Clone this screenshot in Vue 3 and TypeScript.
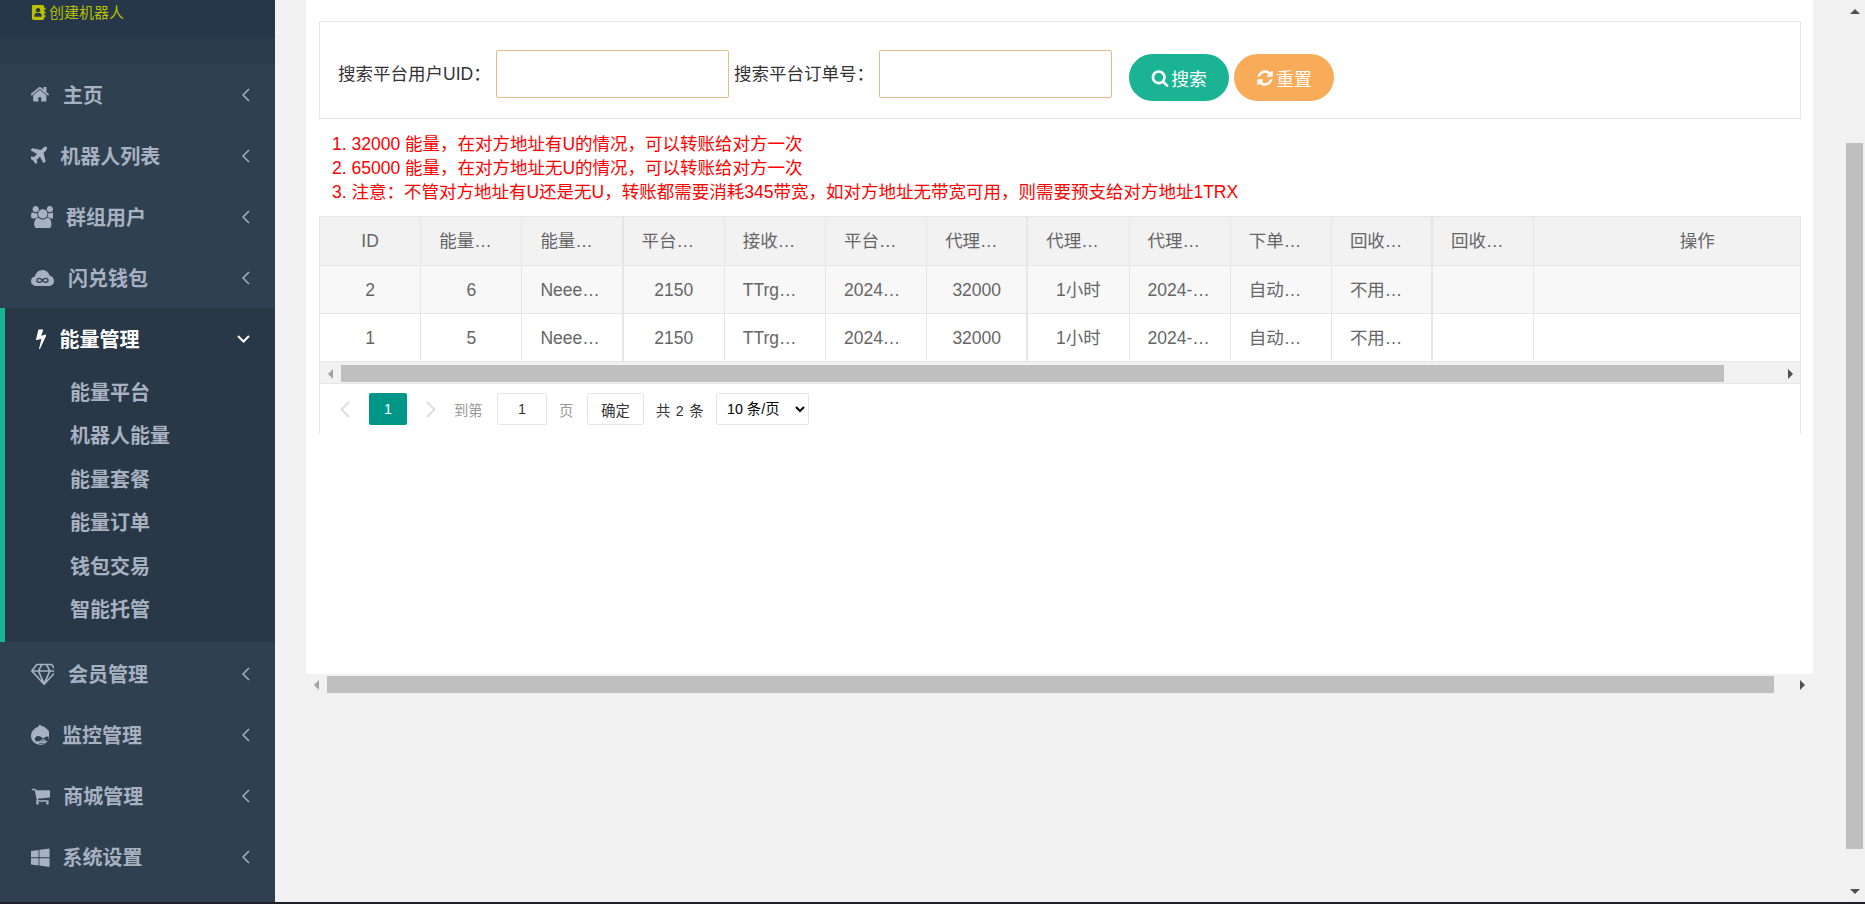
<script setup lang="ts">
interface Icon { d: string; x: number; w: number; size: number }
interface MenuItem { name: string; icon: Icon; gap: number; lead?: number }

const P = {
  home: 'M1408 992v480q0 26-19 45t-45 19h-384v-384h-256v384h-384q-26 0-45-19t-19-45v-480q0-1 .5-3t.5-3l575-474 575 474q1 2 1 6zm223-69l-62 74q-8 9-21 11h-3q-13 0-21-7l-692-577-692 577q-12 8-24 7-13-2-21-11l-62-74q-8-10-7-23.5t11-21.5l719-599q32-26 76-26t76 26l244 204v-195q0-14 9-23t23-9h192q14 0 23 9t9 23v408l219 182q10 8 11 21.5t-7 23.5z',
  plane: 'M1376 160q44 52 12 148t-108 172l-161 161 160 696q5 19-12 33l-128 96q-7 6-19 6-4 0-7-1-15-3-21-16l-279-508-259 259 53 194q5 17-8 31l-96 96q-9 9-23 9h-2q-15-2-24-13l-189-252-252-189q-11-7-13-23-1-13 9-25l96-97q9-9 23-9 6 0 8 1l194 53 259-259-508-279q-14-8-17-24-2-16 9-27l128-128q14-13 30-8l665 159 160-160q76-76 172-108t148 12z',
  users: 'M593 896q-162 5-265 128h-134q-82 0-138-40.5t-56-118.5q0-353 124-353 6 0 43.5 21t97.5 42.5 119 21.5q67 0 133-23-5 37-5 66 0 139 81 256zm1071 637q0 120-73 189.5t-194 69.5h-874q-121 0-194-69.5t-73-189.5q0-53 3.5-103.5t14-109 26.5-108.5 43-97.5 62-81 85.5-53.5 111.5-20q10 0 43 21.5t73 48 107 48 135 21.5 135-21.5 107-48 73-48 43-21.5q61 0 111.5 20t85.5 53.5 62 81 43 97.5 26.5 108.5 14 109 3.5 103.5zm-1024-1277q0 106-75 181t-181 75-181-75-75-181 75-181 181-75 181 75 75 181zm704 384q0 159-112.5 271.5t-271.5 112.5-271.5-112.5-112.5-271.5 112.5-271.5 271.5-112.5 271.5 112.5 112.5 271.5zm576 225q0 78-56 118.5t-138 40.5h-134q-103-123-265-128 81-117 81-256 0-29-5-66 66 23 133 23 59 0 119-21.5t97.5-42.5 43.5-21q124 0 124 353zm-128-609q0 106-75 181t-181 75-181-75-75-181 75-181 181-75 181 75 75 181z',
  bolt: 'M1333 566q18 20 7 44l-540 1157q-13 25-42 25-4 0-14-2-17-5-25.5-19t-4.5-30l197-808-406 101q-4 1-12 1-18 0-31-11-18-15-13-39l201-825q4-14 16-23t28-9h328q19 0 32 12.5t13 29.5q0 8-5 18l-171 463 396-98q8-2 12-2 19 0 34 15z',
  diamond: 'M212 768l623 665-300-665h-323zm812 772l349-772h-698zm-486-900l204-384h-262l-288 384h346zm675 793l623-665h-323zm-530-793h682l-204-384h-274zm827 0h346l-288-384h-262zm141-486l384 512q14 18 13 41.5t-17 40.5l-960 1024q-18 20-47 20t-47-20l-960-1024q-16-17-17-40.5t13-41.5l384-512q18-26 51-26h1152q33 0 51 26z',
  drupal: 'M1295 1586q-5-19-24-5-30 22-87 39t-131 17q-129 0-193-49-5-4-13-4-11 0-26 12-7 6-7.5 16t7.5 20q34 32 87.5 46t102.5 12.5 99-4.5q41-4 84.5-20.5t65-30 28.5-20.5q12-12 7-29zm-39-115q-19-47-39-61-23-15-76-15-47 0-71 10-29 12-78 56-26 24-12 44 9 8 17.5 4.5t31.5-23.5q3-2 10.5-8.5t10.5-8.5 10-7 11.5-7 12.5-5 15-4.5 16.5-2.5 20.5-1q27 0 44.5 7.5t23 14.5 13.5 22q10 17 12.5 20t12.5-1q23-12 14-34zm355-281q0-22-5-44.5t-16.5-45-34-36.5-52.5-14q-33 0-97 41.5t-129 83.5-101 42q-27 1-63.5-19t-76-49-83.5-58-100-49-111-19q-115 1-197 78.5t-84 178.5q-2 112 74 164 29 20 62.5 28.5t103.5 8.5q57 0 132-32.5t134-71 120-70.5 93-31q26 1 65 31.5t71.5 67 68 67.5 55.5 32q35 3 58.5-14t55.5-63q28-41 42.5-101t14.5-106zm53-160q0 164-62 304.5t-166 236-242.5 149.5-290.5 54-293-57.5-247.5-157-170.5-241.5-64-302q0-89 19.5-172.5t49-145.5 70.5-118.5 78.5-94 78.5-69.5 64.5-46.5 42.5-24.5q14-7 69-41.5t91-56 76.5-61 68-75 39-86.5q9 21 29 42t48.5 40 51.5 32 46 23.5 37.5 16.5 44.5 20q54 25 96 44.5t114 68 122.5 90.5 109.5 114.5 96 139 61.5 164 25 190.5z',
  cart: 'M704 1536q0 52-38 90t-90 38-90-38-38-90 38-90 90-38 90 38 38 90zm896 0q0 52-38 90t-90 38-90-38-38-90 38-90 90-38 90 38 38 90zm128-1088v512q0 24-16.5 42.5t-40.5 21.5l-1044 122q13 60 13 70 0 16-24 64h920q26 0 45 19t19 45-19 45-45 19h-1024q-26 0-45-19t-19-45q0-11 8-31.5t16-36 21.5-40 15.5-29.5l-177-823h-204q-26 0-45-19t-19-45 19-45 45-19h256q16 0 28.5 6.5t19.5 15.5 13 24.5 8 26 5.5 29.5 4.5 26h1201q26 0 45 19t19 45z',
  windows: 'M746 1006v651l-682-94v-557h682zm0-743v659h-682v-565zm982 743v786l-907-125v-661h907zm0-878v794h-907v-669z',
  search: 'M1216 832q0-185-131.5-316.5t-316.5-131.5-316.5 131.5-131.5 316.5 131.5 316.5 316.5 131.5 316.5-131.5 131.5-316.5zm512 832q0 52-38 90t-90 38q-54 0-90-38l-343-342q-179 124-399 124-143 0-273.5-55.5t-225-150-150-225-55.5-273.5 55.5-273.5 150-225 225-150 273.5-55.5 273.5 55.5 225 150 150 225 55.5 273.5q0 220-124 399l343 343q37 37 37 90z',
  refresh: 'M1639 1056q0 5-1 7-64 268-268 434.5t-478 166.5q-146 0-282.5-55t-243.5-157l-129 129q-19 19-45 19t-45-19-19-45v-448q0-26 19-45t45-19h448q26 0 45 19t19 45-19 45l-137 137q71 66 161 102t187 36q134 0 250-65t186-179q11-17 53-117 8-23 30-23h192q13 0 22.5 9.5t9.5 22.5zm25-800v448q0 26-19 45t-45 19h-448q-26 0-45-19t-19-45 19-45l138-138q-148-137-349-137-134 0-250 65t-186 179q-11 17-53 117-8 23-30 23h-199q-13 0-22.5-9.5t-9.5-22.5v-7q65-268 270-434.5t480-166.5q146 0 284 55.5t245 156.5l130-129q19-19 45-19t45 19 19 45z',
}

const CLOUD = 'M1 0'

const top: MenuItem[] = [
  { name: '主页', icon: { d: P.home, x: 64, w: 1664, size: 20.5 }, gap: 13 },
  { name: '机器人列表', icon: { d: P.plane, x: 90, w: 1320, size: 22 }, gap: 13 },
  { name: '群组用户', icon: { d: P.users, x: 0, w: 1792, size: 22 }, gap: 13 },
  { name: '闪兑钱包', icon: { d: CLOUD, x: 0, w: 0, size: 0 }, gap: 14 },
]
const active: MenuItem = { name: '能量管理', icon: { d: P.bolt, x: 450, w: 895, size: 21 }, gap: 13, lead: 5 }
const subs = ['能量平台', '机器人能量', '能量套餐', '能量订单', '钱包交易', '智能托管']
const bottom: MenuItem[] = [
  { name: '会员管理', icon: { d: P.diamond, x: 0, w: 1792, size: 23 }, gap: 14 },
  { name: '监控管理', icon: { d: P.drupal, x: 128, w: 1536, size: 21 }, gap: 13 },
  { name: '商城管理', icon: { d: P.cart, x: 0, w: 1728, size: 20 }, gap: 13 },
  { name: '系统设置', icon: { d: P.windows, x: 64, w: 1664, size: 20 }, gap: 13 },
]

const vb = (i: Icon): string => `${i.x} 0 ${i.w} 1792`
const iw = (i: Icon): string => `${(i.size * i.w) / 1792}px`
const ih = (i: Icon): string => `${i.size}px`

interface Cell { t: string; c?: boolean }
const head: Cell[] = [
  { t: 'ID', c: true }, { t: '能量…' }, { t: '能量…' }, { t: '平台…' }, { t: '接收…' }, { t: '平台…' },
  { t: '代理…' }, { t: '代理…' }, { t: '代理…' }, { t: '下单…' }, { t: '回收…' }, { t: '回收…' }, { t: '操作', c: true },
]
const makeRow = (id: string, pid: string): Cell[] => [
  { t: id, c: true }, { t: pid, c: true }, { t: 'Neee…' }, { t: '2150', c: true }, { t: 'TTrg…' }, { t: '2024…' },
  { t: '32000', c: true }, { t: '1小时', c: true }, { t: '2024-…' }, { t: '自动…' }, { t: '不用…' }, { t: '' }, { t: '' },
]
const rows: Cell[][] = [makeRow('2', '6'), makeRow('1', '5')]
</script>

<template>
  <div class="page">
    <aside class="side">
      <div class="brand">
        <div class="brand-top">
          <svg class="book" viewBox="0 0 15 16">
            <path d="M2 0h10a1.5 1.5 0 0 1 1.5 1.5V3H15v2h-1.500v2H15v2h-1.500v2H15v2h-1.500v1.500A1.500 1.500 0 0 1 12 16H2A1.500 1.500 0 0 1 .5 14.500V1.500A1.500 1.500 0 0 1 2 0z" fill="#b9c000" />
            <circle cx="7" cy="5.600" r="2.300" fill="#26384a" />
            <path d="M3.200 12.500v-1.500c0-1.500 1-2.500 2-2.500h3.600c1 0 2 1 2 2.500v1.500z" fill="#26384a" />
          </svg>
          <span>创建机器人</span>
        </div>
        <div class="brand-low"></div>
      </div>

      <nav class="menu">
        <a v-for="m in top" :key="m.name" class="item">
          <svg v-if="m.icon.w" class="ico" :style="{ width: iw(m.icon), height: ih(m.icon), marginRight: m.gap + 'px' }" :viewBox="vb(m.icon)"><path :d="m.icon.d" /></svg>
          <svg v-else class="ico cloud" viewBox="0 0 23 16">
            <path d="M6 16C2.500 16 0 14 0 11.200 0 8.800 1.700 7 4 6.600 4.800 2.800 7.800 0 11.500 0c3.500 0 6.300 2.300 7.100 5.600 2.600.5 4.400 2.700 4.400 5.300C23 13.900 20.700 16 17.500 16z" />
            <path d="M11.500 10.300c-1-1.300-2-2-3.200-2-1.300 0-2.300.8-2.300 2s1 2 2.300 2c1.200 0 2.200-.7 3.200-2zm0 0c1 1.300 2 2 3.200 2 1.300 0 2.300-.8 2.300-2s-1-2-2.300-2c-1.200 0-2.200.7-3.200 2z" fill="none" stroke="#2f4050" stroke-width="1.300" />
          </svg>
          <span class="name">{{ m.name }}</span>
          <svg class="chev" viewBox="0 0 8 14"><path d="M7 1 1 7l6 6" /></svg>
        </a>

        <div class="group">
          <a class="item on">
            <svg class="ico lead" :style="{ width: iw(active.icon), height: ih(active.icon), marginRight: active.gap + 'px' }" :viewBox="vb(active.icon)"><path :d="active.icon.d" /></svg>
            <span class="name">{{ active.name }}</span>
            <svg class="chev down" viewBox="0 0 13 8"><path d="M1 1l5.500 5.500L12 1" /></svg>
          </a>
          <a v-for="s in subs" :key="s" class="sub">{{ s }}</a>
        </div>

        <a v-for="m in bottom" :key="m.name" class="item low">
          <svg class="ico" :style="{ width: iw(m.icon), height: ih(m.icon), marginRight: m.gap + 'px' }" :viewBox="vb(m.icon)"><path :d="m.icon.d" /></svg>
          <span class="name">{{ m.name }}</span>
          <svg class="chev" viewBox="0 0 8 14"><path d="M7 1 1 7l6 6" /></svg>
        </a>
      </nav>
    </aside>

    <main class="main">
      <div class="panel">
        <form class="search" @submit.prevent>
          <label class="lb lb1">搜索平台用户UID：</label>
          <input class="inp" type="text" />
          <label class="lb lb2">搜索平台订单号：</label>
          <input class="inp" type="text" />
          <button class="btn teal" type="button">
            <svg viewBox="0 0 1792 1792"><path :d="P.search" /></svg>搜索
          </button>
          <button class="btn orange" type="button">
            <svg viewBox="0 0 1792 1792"><path :d="P.refresh" /></svg>重置
          </button>
        </form>

        <div class="notes">
          <div>1. 32000 能量，在对方地址有U的情况，可以转账给对方一次</div>
          <div>2. 65000 能量，在对方地址无U的情况，可以转账给对方一次</div>
          <div>3. 注意：不管对方地址有U还是无U，转账都需要消耗345带宽，如对方地址无带宽可用，则需要预支给对方地址1TRX</div>
        </div>

        <div class="tbl">
          <div class="tr th">
            <div v-for="(c, i) in head" :key="i" class="td" :class="{ ctr: c.c }">{{ c.t }}</div>
          </div>
          <div v-for="(r, ri) in rows" :key="ri" class="tr" :class="{ stripe: ri === 0 }">
            <div v-for="(c, i) in r" :key="i" class="td" :class="{ ctr: c.c }">{{ c.t }}</div>
          </div>
          <div class="hbar inner">
            <span class="tri left dim"></span>
            <div class="thumb"></div>
            <span class="tri right"></span>
          </div>
          <div class="pager">
            <svg class="pg-arrow" viewBox="0 0 10 17"><path d="M9 1 1.500 8.500 9 16" /></svg>
            <span class="pg-cur">1</span>
            <svg class="pg-arrow nx" viewBox="0 0 10 17"><path d="M1 1l7.500 7.500L1 16" /></svg>
            <span class="pg-mute pg-to">到第</span>
            <input class="pg-inp" type="text" value="1" />
            <span class="pg-mute pg-unit">页</span>
            <button class="pg-ok" type="button">确定</button>
            <span class="pg-total">共 2 条</span>
            <select class="pg-sel"><option>10 条/页</option></select>
          </div>
        </div>
      </div>

      <div class="hbar outer">
        <span class="tri left dim"></span>
        <div class="thumb"></div>
        <span class="tri right"></span>
      </div>
    </main>

    <div class="vbar">
      <span class="tri up"></span>
      <div class="vthumb"></div>
      <span class="tri dn"></span>
    </div>
  </div>
</template>

<style scoped>
.page {
  display: flex;
  box-sizing: border-box;
  width: 1865px;
  height: 904px;
  overflow: hidden;
  border-bottom: 2px solid #20202c;
  background: #f2f2f2;
  font-family: "Liberation Sans", "Noto Sans CJK SC", sans-serif;
  color: #333;
}

/* sidebar */
.side { width: 275px; flex: none; background: #2f4050; display: flex; flex-direction: column; }
.brand { height: 64px; flex: none; background: #2a3b4c; }
.brand-top {
  height: 38px;
  box-sizing: border-box;
  padding: 5px 0 0 31px;
  background: #26374a;
  display: flex;
  align-items: flex-start;
  color: #b5bf00;
  font-size: 15px;
  line-height: 15px;
}
.book { width: 15px; height: 15px; margin-right: 3px; flex: none; }
.menu { display: flex; flex-direction: column; }
.item {
  height: 61px;
  box-sizing: border-box;
  padding: 0 25px 0 31px;
  display: flex;
  align-items: center;
  color: #a7b1c2;
}
.item.low { padding-top: 2px; }
.name { font-size: 20px; font-weight: 700; flex: 1; line-height: 24px; padding-top: 2px; }
.ico { flex: none; fill: #a7b1c2; }
.cloud { width: 23px; height: 16px; margin-right: 14px; }
.chev { width: 8px; height: 14px; flex: none; fill: none; stroke: #a7b1c2; stroke-width: 1.500; }
.chev.down { width: 13px; height: 8px; stroke: #fff; stroke-width: 2; }
.group { background: #293846; border-left: 5px solid #1ab394; height: 334px; box-sizing: border-box; }
.item.on { padding-left: 26px; color: #fff; margin-bottom: 3px; }
.item.on .ico { fill: #fff; }
.lead { margin-left: 5px; }
.sub {
  display: block;
  height: 43.400px;
  line-height: 43.400px;
  padding-left: 65px;
  font-size: 20px;
  font-weight: 700;
  color: #a7b1c2;
}

/* content */
.main { width: 1569px; flex: none; padding-left: 31px; box-sizing: border-box; }
.panel {
  width: 1507px;
  height: 674px;
  box-sizing: border-box;
  background: #fff;
  padding: 21px 12px 0 13px;
}
.search {
  height: 98px;
  box-sizing: border-box;
  border: 1px solid #e6e6e6;
  padding: 28px 0 0 18px;
  display: flex;
  align-items: flex-start;
}
.lb { font-size: 17.500px; line-height: 48px; color: #333; white-space: nowrap; }
.lb1 { width: 158px; }
.lb2 { width: 145px; margin-left: 5px; }
.inp {
  width: 233px;
  height: 48px;
  box-sizing: border-box;
  border: 1px solid #e2bd8a;
  border-radius: 2px;
  background: #fff;
  outline: none;
  padding: 0 10px;
}
.btn {
  width: 100px;
  height: 47px;
  margin-top: 4px;
  margin-left: 5px;
  border: 0;
  border-radius: 24px;
  color: #fff;
  font: 17.800px "Liberation Sans", "Noto Sans CJK SC", sans-serif;
  display: flex;
  align-items: center;
  justify-content: center;
  gap: 2px;
  padding: 0;
}
.btn svg { width: 18px; height: 18px; fill: #fff; flex: none; }
.teal { background: #1ab394; margin-left: 17px; }
.orange { background: #f8ac59; }

.notes { margin-top: 13px; padding-left: 13px; font-size: 17.500px; line-height: 24px; color: #f00; white-space: nowrap; }

.tbl {
  margin-top: 12px;
  border: 1px solid #e6e6e6;
  border-bottom: 0;
  height: 218px;
  box-sizing: border-box;
  color: #666;
  font-size: 17.500px;
  overflow: hidden;
}
.tr {
  display: grid;
  grid-template-columns: repeat(12, 101.200px) 326px;
  height: 48px;
  box-sizing: border-box;
  border-bottom: 1px solid #e6e6e6;
}
.th { height: 49px; background: #f2f2f2; }
.stripe { background: #f8f8f8; }
.td {
  box-sizing: border-box;
  border-right: 1px solid #e6e6e6;
  padding: 0 18px;
  line-height: 48px;
  white-space: nowrap;
  overflow: hidden;
}
.td:nth-child(4n+3) { border-right-width: 2px; }
.td:last-child { border-right: 0; }
.ctr { text-align: center; }

.hbar { display: flex; align-items: center; background: #f1f1f1; }
.thumb { background: #bfbfbf; }
.inner { height: 22px; border-bottom: 1px solid #e6e6e6; box-sizing: border-box; padding: 2px 0 0 8px; }
.inner .thumb { height: 17px; width: 1383px; margin-left: 8px; }
.inner .right { margin-left: 64px; }
.outer { height: 20px; width: 1507px; padding: 2px 0 1px 8px; box-sizing: border-box; }
.outer .thumb { height: 17px; width: 1447px; margin-left: 8px; }
.outer .right { margin-left: 26px; }

.tri { width: 0; height: 0; border-style: solid; flex: none; display: block; }
.left { border-width: 5px 5px 5px 0; border-color: transparent #505050 transparent transparent; }
.left.dim { border-right-color: #a3a3a3; }
.right { border-width: 5px 0 5px 5px; border-color: transparent transparent transparent #505050; }

.pager { display: flex; align-items: center; height: 50px; padding: 0 0 0 20px; box-sizing: border-box; font-size: 14.300px; }
.pg-arrow { width: 10px; height: 17px; fill: none; stroke: #d5d5d5; stroke-width: 1.500; flex: none; }
.pg-cur {
  width: 38px;
  height: 32px;
  line-height: 32px;
  margin: 0 19px;
  background: #009688;
  color: #fff;
  text-align: center;
  border-radius: 2px;
  flex: none;
}
.pg-mute { color: #999; }
.pg-to { margin-left: 18px; width: 30px; white-space: nowrap; }
.pg-inp {
  width: 50px;
  height: 32px;
  margin-left: 13px;
  box-sizing: border-box;
  border: 1px solid #e6e6e6;
  border-radius: 2px;
  text-align: center;
  font: 14.300px "Liberation Sans", sans-serif;
  color: #333;
  outline: none;
  padding: 0;
}
.pg-unit { margin-left: 12px; width: 15px; }
.pg-ok {
  width: 57px;
  height: 32px;
  margin-left: 13px;
  box-sizing: border-box;
  border: 1px solid #e6e6e6;
  border-radius: 2px;
  background: #fff;
  color: #333;
  font: 14.300px "Liberation Sans", "Noto Sans CJK SC", sans-serif;
  padding: 0;
}
.pg-total { margin-left: 12px; width: 48px; white-space: nowrap; color: #333; word-spacing: 1.500px; }
.pg-sel {
  width: 93px;
  height: 32px;
  margin-left: 12px;
  box-sizing: border-box;
  border: 1px solid #e6e6e6;
  border-radius: 2px;
  background: #fff;
  color: #000;
  font: 14.300px "Liberation Sans", "Noto Sans CJK SC", sans-serif;
  padding: 0 0 0 6px;
  outline: none;
}

/* page scrollbar */
.vbar { width: 21px; flex: none; background: #f1f1f1; display: flex; flex-direction: column; align-items: center; }
.up { border-width: 0 5px 5px; border-color: transparent transparent #505050; margin-top: 9px; }
.vthumb { width: 17px; height: 706px; margin-top: 129px; background: #bfbfbf; }
.dn { border-width: 5px 5px 0; border-color: #505050 transparent transparent; margin-top: 40px; }
</style>
